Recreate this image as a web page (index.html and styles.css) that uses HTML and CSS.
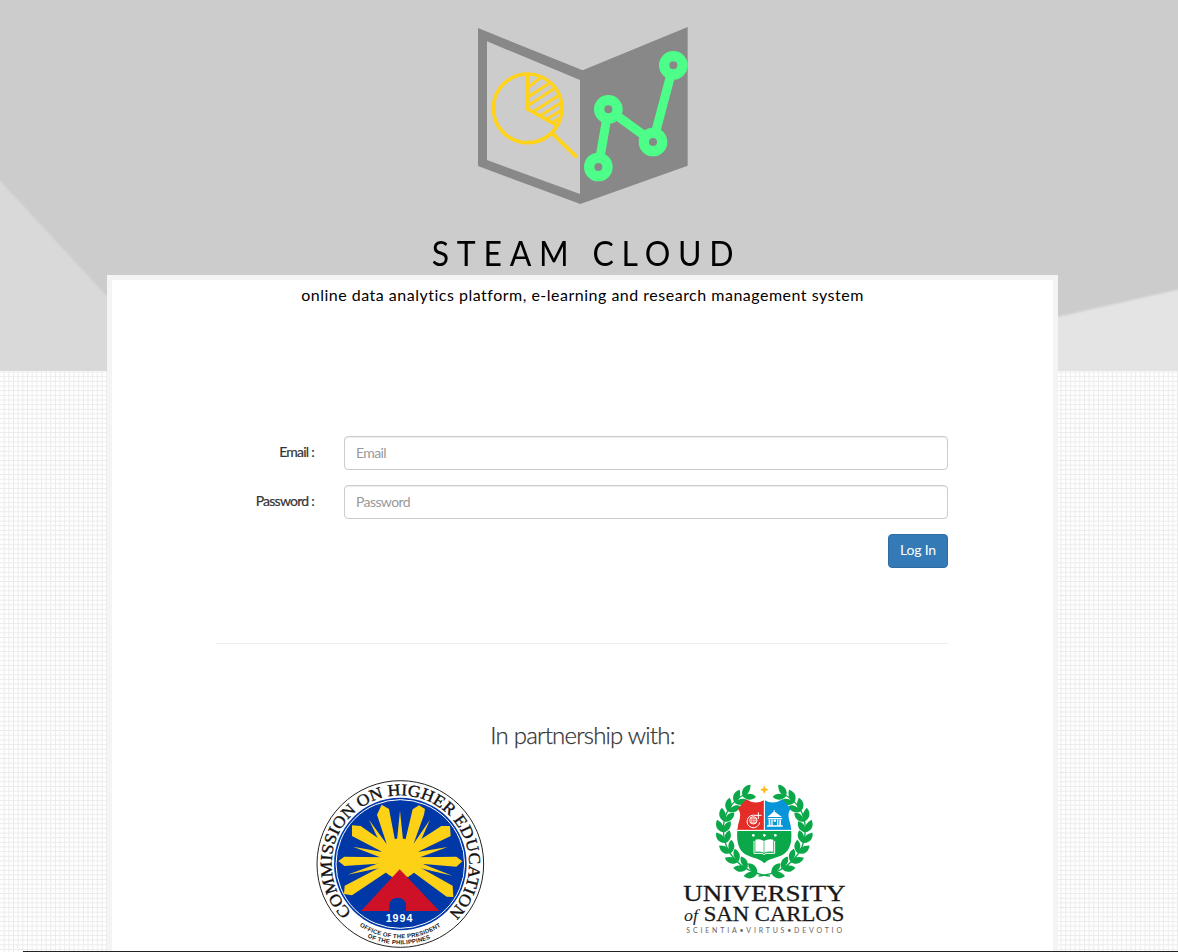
FILE: index.html
```html
<!DOCTYPE html>
<html lang="en">
<head>
<meta charset="utf-8">
<title>STEAM Cloud</title>
<link rel="stylesheet" href="styles.css">
</head>
<body>
<header class="hero">
  <svg class="facets" viewBox="0 0 1178 371" aria-hidden="true">
    <defs><filter id="soft"><feGaussianBlur stdDeviation="1"/></filter></defs>
    <g filter="url(#soft)">
      <path d="M-10 170L190 386H-10Z" fill="#d9d9d9"/>
      <path d="M1000 330L1190 287V384H1000Z" fill="#e4e4e4"/>
    </g>
  </svg>
  <svg class="brand-mark" viewBox="0 0 750 630" role="img" aria-label="STEAM Cloud">
    <path fill="#888" fill-rule="evenodd" d="M54 54L368 181L683 51V467L361 582L54 468ZM81 94V450L360 552V210Z"/>
    <defs><clipPath id="slice"><path d="M203 298V190A106 106 0 0 1 289 352Z"/></clipPath></defs>
    <g fill="none" stroke="#ffd21c">
      <circle cx="203" cy="295" r="103" stroke-width="11"/>
      <path stroke-width="11" d="M203 195V297L287 344"/>
      <path stroke-width="12" d="M275 368L351 442"/>
      <path clip-path="url(#slice)" stroke-width="9" d="M196 239L258 190M196 266L288 207M196 292L300 224M210 311L310 247M230 324L316 270M252 333L316 293M272 341L316 313"/>
    </g>
    <path d="M415 471L445 298L579 396L640 166" fill="none" stroke="#4dff88" stroke-width="27"/>
    <g fill="#888" stroke="#4dff88" stroke-width="31">
      <circle cx="415" cy="471" r="27.500"/><circle cx="445" cy="298" r="27.500"/>
      <circle cx="579" cy="396" r="27.500"/><circle cx="640" cy="166" r="27.500"/>
    </g>
  </svg>
  <h1 class="brand-name">STEAM CLOUD</h1>
</header>
<main class="panel">
  <p class="tagline">online data analytics platform, e-learning and research management system</p>
  <form class="login">
    <label class="login-label" for="email">Email :</label>
    <input class="login-input" id="email" type="email" placeholder="Email">
    <label class="login-label" for="password">Password :</label>
    <input class="login-input" id="password" type="password" placeholder="Password">
    <button class="login-button" type="button">Log In</button>
  </form>
  <hr class="rule">
  <h2 class="partners-title">In partnership with:</h2>
  <div class="partners">
    <svg class="ched" viewBox="0 0 600 546" role="img" aria-label="Commission on Higher Education">
      <defs>
        <path id="ring" d="M155 427.500A206 206 0 1 1 447 427.500"/>
        <path id="office" d="M179 468A222 222 0 0 0 427 466"/>
        <path id="phil" d="M202 502A241 241 0 0 0 395 504"/>
      </defs>
      <circle cx="301" cy="282" r="250" fill="#fff" stroke="#222" stroke-width="3"/>
      <circle cx="301" cy="282" r="199" fill="#0038a8"/>
      <circle cx="301" cy="282" r="193" fill="none" stroke="#fff" stroke-width="3"/>
      <g fill="#fdd116">
        <circle cx="300" cy="265" r="60"/>
        <path d="M300 122L310 220H290ZM207 149L264 228L250 240ZM390 149L350 240L336 228ZM159 230L252 247V266ZM443 231L348 266V247ZM142 314L246 276L258 290ZM457 317L342 290L354 276Z"/>
        <path d="M245 104L267 117L289 232L266 240L231 134ZM357 106L375 117L372 134L334 240L311 232L338 118ZM156 166L182 168L268 228L252 248L156 198ZM450 168L452 198L348 248L332 228L424 168ZM115 273L133 260L256 262V280L133 288ZM487 274L469 260L344 262V280L469 290ZM134 347L252 286L266 302L156 376L132 372ZM458 347L348 286L334 302L440 380L460 381Z"/>
        <path d="M246 286L276 321L299 300L325 321L354 286Z"/>
      </g>
      <path d="M299 298L418 423H318V402A26 26 0 0 0 268 402V423H183Z" fill="#ce1126"/>
      <text x="257" y="456" class="ched-year" textLength="80">1994</text>
      <text class="ched-ring"><textPath href="#ring" textLength="972" lengthAdjust="spacingAndGlyphs">COMMISSION ON HIGHER EDUCATION</textPath></text>
      <text class="ched-foot"><textPath href="#office" textLength="258">OFFICE OF THE PRESIDENT</textPath></text>
      <text class="ched-foot"><textPath href="#phil" textLength="195">OF THE PHILIPPINES</textPath></text>
    </svg>
    <svg class="usc" viewBox="0 0 570 510" role="img" aria-label="University of San Carlos">
      <defs>
        <g id="leaves">
          <path d="M0 0C-20 -5 -25 -24 -16 -39C0 -29 6 -13 0 0Z"/>
          <path d="M0 0C-1 -18 9 -31 24 -32C27 -14 16 -2 0 0Z"/>
        </g>
        <g id="branch" fill="#0ba84a">
          <path d="M300 303C210 294 160 230 160 165C160 110 190 74 232 54" fill="none" stroke="#0ba84a" stroke-width="4"/>
          <use href="#leaves" transform="translate(262 294) rotate(-80)"/>
          <use href="#leaves" transform="translate(232 280) rotate(-65)"/>
          <use href="#leaves" transform="translate(205 260) rotate(-52)"/>
          <use href="#leaves" transform="translate(183 234) rotate(-35)"/>
          <use href="#leaves" transform="translate(167 204) rotate(-20)"/>
          <use href="#leaves" transform="translate(160 172) rotate(-4)"/>
          <use href="#leaves" transform="translate(163 140) rotate(12)"/>
          <use href="#leaves" transform="translate(175 110) rotate(28)"/>
          <use href="#leaves" transform="translate(194 84) rotate(43)"/>
          <use href="#leaves" transform="translate(218 64) rotate(56)"/>
        </g>
        <clipPath id="shield"><path d="M283 75Q256 91 228 73L204 101Q216 116 206 143C198 175 199 213 218 232C238 250 266 247 283 265C300 247 330 250 348 232C367 213 368 175 360 143Q350 116 362 101L338 73Q310 91 283 75Z"/></clipPath>
      </defs>
      <use href="#branch"/>
      <use href="#branch" transform="translate(566 0) scale(-1 1)"/>
      <path d="M283 33L286 41L294 44L286 47L283 55L280 47L272 44L280 41Z" fill="#fdb913" stroke="#fdb913" stroke-width="2"/>
      <g clip-path="url(#shield)">
        <path d="M190 60H282V165H190Z" fill="#e52d27"/>
        <path d="M284 60H375V165H284Z" fill="#0795d9"/>
        <path d="M190 168H375V270H190Z" fill="#0ba84a"/>
      </g>
      <path d="M283 75V166M204 166H362" stroke="#fff" stroke-width="3"/>
      <g fill="none" stroke="#fff" stroke-width="3">
        <path d="M258 122A19 19 0 1 0 269 142M265 112V132M256 121H275"/>
        <circle cx="250" cy="136" r="11"/><path d="M239 136H261M241 130H259M241 142H259M250 125V147M245 126V146M255 126V146" stroke-width="1.500"/>
      </g>
      <path fill="#fff" d="M314 105V110L336 126H292L311 110V105ZM293 129H336V133H293ZM296 134H301V151H296ZM304 134H308V151H304ZM321 134H325V151H321ZM328 134H333V151H328ZM291 151H338V155H291ZM311 134H318V140H311Z"/>
      <g fill="#fff"><circle cx="250" cy="181" r="4"/><circle cx="283" cy="181" r="4"/><circle cx="316" cy="181" r="4"/>
        <path d="M256 194Q271 191 282 198Q294 191 310 194V230Q294 228 282 233Q270 228 256 230Z"/></g>
      <path d="M252 198V235H276L282 239L288 235H314V198" fill="none" stroke="#fff" stroke-width="3"/>
      <path d="M282 199V231" stroke="#0ba84a" stroke-width="2"/>
      <text class="usc-name usc-large" x="40" y="379" textLength="487" lengthAdjust="spacingAndGlyphs">UNIVERSITY</text>
      <text class="usc-of" x="42" y="437" textLength="42" lengthAdjust="spacingAndGlyphs">of</text>
      <text class="usc-name usc-small" x="101" y="437" textLength="422" lengthAdjust="spacingAndGlyphs">SAN CARLOS</text>
      <text class="usc-motto" x="49" y="474" textLength="467">SCIENTIA•VIRTUS•DEVOTIO</text>
    </svg>
  </div>
</main>
<div class="bottom-edge"></div>
</body>
</html>
```
FILE: styles.css
```css
* { box-sizing: border-box; }
body {
  margin: 0;
  height: 952px;
  overflow: hidden;
  font-family: Lato, "Liberation Sans", sans-serif;
  color: #333;
  background-color: #fefefe;
  background-image:
    linear-gradient(90deg, transparent 3.500px, #ebebeb 3.500px),
    linear-gradient(transparent 3.500px, #ebebeb 3.500px);
  background-size: 4.670px 4.670px;
}
.hero {
  position: relative;
  height: 371px;
  padding-top: 10px;
  background: #ccc;
  display: flex;
  flex-direction: column;
  align-items: center;
}
.facets { position: absolute; inset: 0; width: 1178px; height: 371px; }
.brand-mark { position: relative; width: 250px; height: 210px; margin-left: -13px; }
.brand-mark { margin-left: -8px; }
.brand-name {
  position: relative;
  margin: 9px 0 0 -5px;
  font-size: 35px;
  line-height: 46px;
  font-weight: 400;
  letter-spacing: 8.500px;
  color: #000;
  white-space: nowrap;
  transform: scaleX(.913);
}
.panel {
  position: relative;
  width: 951px;
  height: 700px;
  margin: -96px 0 0 107px;
  border: 5px solid #f4f4f4;
  background: #fff;
}
.tagline {
  margin: 3px 0 0;
  text-align: center;
  font-size: 16px;
  line-height: 23px;
  color: #000;
  letter-spacing: .5px;
}
.login {
  display: grid;
  grid-template-columns: 98px 604px;
  column-gap: 30px;
  row-gap: 15px;
  margin: 130px 0 0 104px;
}
.login-label {
  text-align: right;
  font-size: 14px;
  line-height: 31px;
  letter-spacing: -.75px;
  -webkit-text-stroke: .2px #333;
}
.login-input {
  height: 34px;
  padding: 5px 11px 7px;
  font: 14px/20px Lato, sans-serif;
  letter-spacing: -.6px;
  border: 1px solid #ccc;
  border-radius: 4px;
  background: #fff;
  box-shadow: inset 0 1px 1px rgba(0, 0, 0, .075);
}
.login-input::placeholder { color: #999; }
.login-button {
  grid-column: 2;
  justify-self: end;
  width: 60px;
  height: 34px;
  padding: 0 0 2px;
  font: 14px/20px Lato, sans-serif;
  letter-spacing: -.2px;
  color: #fff;
  background: #337ab7;
  border: 1px solid #2e6da4;
  border-radius: 4px;
}
.rule {
  width: 732px;
  margin: 75px 0 0 104px;
  border: 0;
  border-top: 1px solid #eee;
}
.partners-title {
  margin: 75px 0 0;
  text-align: center;
  font-size: 24px;
  line-height: 32px;
  font-weight: 300;
  letter-spacing: -.8px;
  -webkit-text-stroke: .25px #333;
}
.partners { display: flex; gap: 170px; margin: 19px 0 0 188px; }
.ched { width: 200px; height: 182px; }
.usc { width: 190px; height: 170px; margin-top: 5px; }
.ched-ring { font: 50px "Liberation Serif", serif; fill: #111; stroke: #111; stroke-width: 1px; }
.ched-foot { font: bold 18px "Liberation Sans", sans-serif; fill: #222; }
.ched-year { font: bold 32px "Liberation Sans", sans-serif; fill: #fff; }
.usc-name { font-family: "Liberation Serif", serif; fill: #181818; stroke: #181818; stroke-width: .8px; }
.usc-large { font-size: 68px; }
.usc-small { font-size: 60px; }
.usc-of { font: italic 50px "Liberation Serif", serif; fill: #222; }
.usc-motto { font: 21px Lato, sans-serif; fill: #666; }
.bottom-edge { position: fixed; left: 23px; right: 0; bottom: 0; height: 1px; background: #222; }
```
